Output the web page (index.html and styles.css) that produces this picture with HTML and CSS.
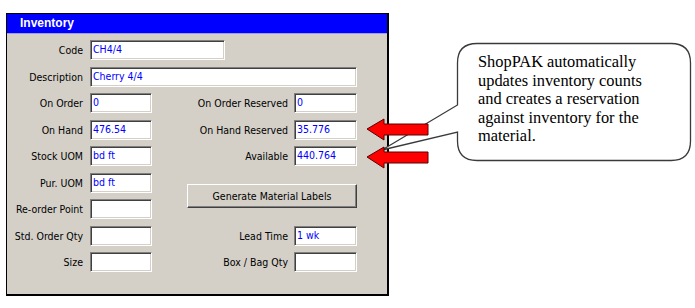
FILE: index.html
```html
<!DOCTYPE html>
<html lang="en">
<head>
<meta charset="UTF-8" />
<title>Inventory - ShopPAK</title>
<link rel="stylesheet" href="styles.css">
</head>
<body>
  <div class="canvas">

    <div class="window">
      <div class="title-bar">Inventory</div>

      <div class="form">
        <span class="label">Code</span>
        <div class="field code">CH4/4</div>

        <span class="label">Description</span>
        <div class="field desc">Cherry 4/4</div>

        <span class="label">On Order</span>
        <div class="field">0</div>
        <span class="label right">On Order Reserved</span>
        <div class="field">0</div>

        <span class="label">On Hand</span>
        <div class="field">476.54</div>
        <span class="label right">On Hand Reserved</span>
        <div class="field">35.776</div>

        <span class="label">Stock UOM</span>
        <div class="field">bd ft</div>
        <span class="label right">Available</span>
        <div class="field">440.764</div>

        <span class="label">Pur. UOM</span>
        <div class="field">bd ft</div>
        <button class="gen-btn">Generate Material Labels</button>

        <span class="label">Re-order Point</span>
        <div class="field"></div>

        <span class="label">Std. Order Qty</span>
        <div class="field"></div>
        <span class="label right">Lead Time</span>
        <div class="field">1 wk</div>

        <span class="label">Size</span>
        <div class="field"></div>
        <span class="label right">Box / Bag Qty</span>
        <div class="field"></div>
      </div>
    </div>

    <!-- callout bubble + arrows drawn over the screenshot -->
    <svg class="overlay" width="695" height="308" viewBox="0 0 695 308">
      <path class="bubble" d="M457.5 105 L457.5 63 Q457.5 43.5 477 43.5 L671 43.5 Q690.5 43.5 690.5 63 L690.5 141 Q690.5 160.5 671 160.5 L477 160.5 Q457.5 160.5 457.5 141 L457.5 132 L382 150 Z" />
      <polygon class="arrow" points="367,129 384,119 384,124 428,124 428,135 384,135 384,140" />
      <polygon class="arrow" points="367,157 384,147 384,152 428,152 428,163 384,163 384,168" />
    </svg>

    <div class="callout-text">
      ShopPAK automatically<br>
      updates inventory counts<br>
      and creates a reservation<br>
      against inventory for the<br>
      material.
    </div>

  </div>
</body>
</html>
```

FILE: styles.css
```css
body {
  margin: 0;
  background: #ffffff;
  font-family: "DejaVu Sans Condensed", "Liberation Sans", Arial, sans-serif;
}

.canvas {
  position: relative;
  width: 695px;
  height: 308px;
  overflow: hidden;
}

/* the dialog window */
.window {
  margin: 13px 0 0 6px;
  width: 383px;
  height: 283px;
  box-sizing: border-box;
  background: #d4d0c8;
  border-top: 1px solid #000;
  border-left: 1px solid #000;
  border-right: 2px solid #000;
  border-bottom: 2px solid #000;
}

.title-bar {
  height: 19px;
  line-height: 19px;
  background: #0000ff;
  border-bottom: 1px solid #9c9cf0;
  color: #ffffff;
  font-family: "Liberation Sans", Arial, sans-serif;
  font-weight: bold;
  font-size: 12px;
  padding-left: 13px;
}

.form {
  display: grid;
  grid-template-columns: 83px 62px 142px 63px;
  grid-auto-rows: 20px;
  row-gap: 6.5px;
  padding-top: 6px;
}

.label {
  grid-column: 1;
  font-size: 10.5px;
  line-height: 20px;
  text-align: right;
  padding-right: 7px;
  color: #000;
  white-space: nowrap;
}
.label.right {
  grid-column: 3;
  padding-right: 6px;
}

.field {
  box-sizing: border-box;
  height: 20px;
  background: #ffffff;
  border-top: 1px solid #808080;
  border-left: 1px solid #808080;
  border-right: 1px solid #ffffff;
  border-bottom: 1px solid #ffffff;
  box-shadow: inset 1px 1px 0 #404040, inset -1px -1px 0 #d4d0c8;
  padding-left: 2px;
  color: #0000ff;
  font-size: 10.5px;
  line-height: 17px;
  white-space: nowrap;
}
.field.code {
  grid-column: 2 / span 2;
  width: 135px;
}
.field.desc {
  grid-column: 2 / span 3;
}

.gen-btn {
  grid-column: 3 / 5;
  grid-row: 6 / span 2;
  align-self: center;
  margin-left: 35px;
  height: 24px;
  background: #d4d0c8;
  border-top: 1px solid #ffffff;
  border-left: 1px solid #ffffff;
  border-right: 1px solid #404040;
  border-bottom: 1px solid #404040;
  box-shadow: inset -1px -1px 0 #808080;
  font-family: "DejaVu Sans Condensed", "Liberation Sans", Arial, sans-serif;
  font-size: 10.5px;
  color: #000;
  padding: 0;
}

/* annotation layer */
.overlay {
  position: absolute;
  left: 0;
  top: 0;
  pointer-events: none;
}
.bubble {
  fill: #ffffff;
  stroke: #3a3a3a;
  stroke-width: 1.3;
}
.arrow {
  fill: #ff0000;
  stroke: #5a0000;
  stroke-width: 1;
}

.callout-text {
  position: absolute;
  left: 478px;
  top: 53px;
  font-family: "Liberation Serif", "Times New Roman", serif;
  font-size: 16.4px;
  line-height: 18.5px;
  color: #000;
}
```
